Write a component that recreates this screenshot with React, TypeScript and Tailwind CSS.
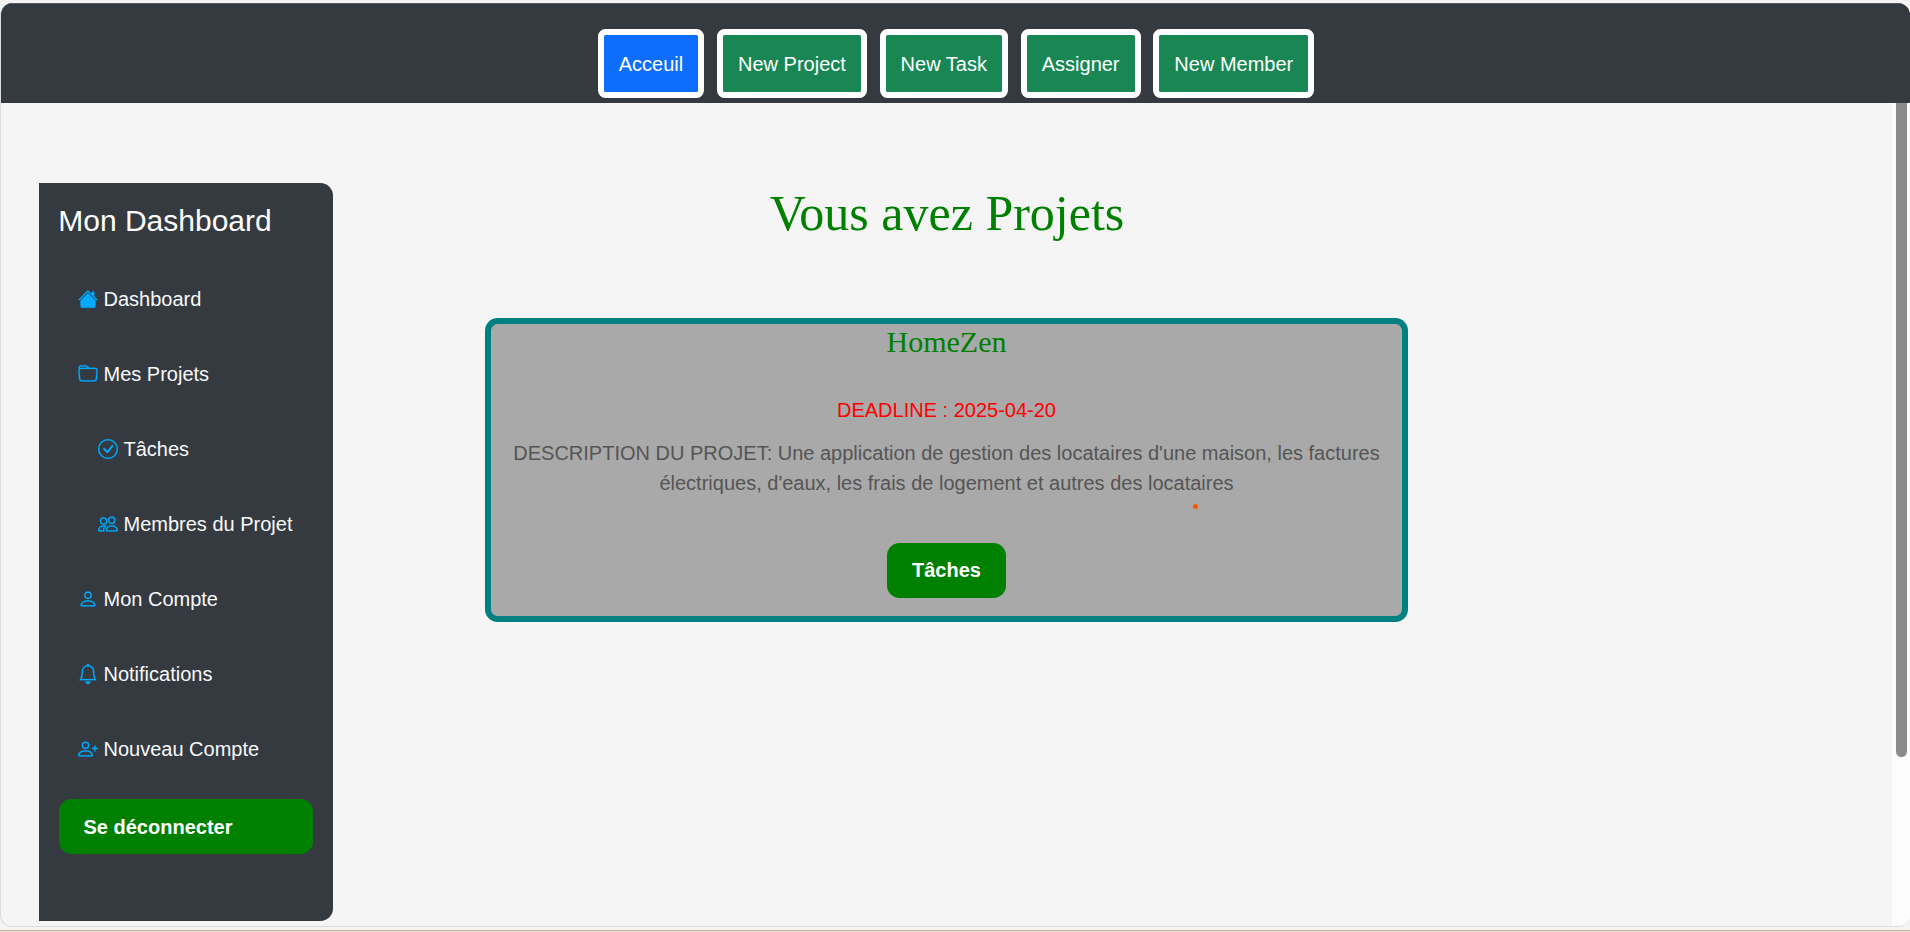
import type { IconType } from "react-icons";
import {
  BsBell,
  BsCheckCircle,
  BsFolder,
  BsHouseFill,
  BsPeople,
  BsPerson,
  BsPersonPlus,
} from "react-icons/bs";

type NavItem = { label: string; icon: IconType; nested?: boolean };

const actions = ["Acceuil", "New Project", "New Task", "Assigner", "New Member"];

const navItems: NavItem[] = [
  { label: "Dashboard", icon: BsHouseFill },
  { label: "Mes Projets", icon: BsFolder },
  { label: "Tâches", icon: BsCheckCircle, nested: true },
  { label: "Membres du Projet", icon: BsPeople, nested: true },
  { label: "Mon Compte", icon: BsPerson },
  { label: "Notifications", icon: BsBell },
  { label: "Nouveau Compte", icon: BsPersonPlus },
];

function Header() {
  return (
    <header className="flex h-[100px] shrink-0 justify-center gap-[12.6px] border-t border-[#5a5e64] bg-[#343a40] pt-[25px] pl-px">
      {actions.map((label, i) => (
        <button
          key={label}
          className={`h-[69px] rounded-[7.5px] border-6 border-white px-[15.1px] text-white ${i === 0 ? "bg-[#0d6efd]" : "bg-[#198754]"}`}
        >
          {label}
        </button>
      ))}
    </header>
  );
}

function Sidebar() {
  return (
    <aside className="flex h-[738px] w-[294px] shrink-0 flex-col rounded-r-[12.5px] bg-[#343a40] px-5 pt-5 text-white">
      <h2 className="-ml-[0.75px] text-[30px] leading-9">Mon Dashboard</h2>
      <nav className="mt-[22.5px] flex flex-col text-[#f8f9fa]">
        {navItems.map(({ label, icon: Icon, nested }) => (
          <a
            key={label}
            className={`flex h-[75px] items-center gap-[5.5px] whitespace-nowrap ${nested ? "pl-[39px]" : "pl-[19px]"}`}
          >
            <Icon className="size-5 shrink-0 text-[#00aaff] [stroke-width:0.2]" />
            {label}
          </a>
        ))}
      </nav>
      <button className="mt-[12.5px] h-[55px] rounded-[12.5px] bg-[#008000] px-[24.5px] text-left font-bold">
        Se déconnecter
      </button>
    </aside>
  );
}

function ProjectCard() {
  return (
    <article className="relative mt-[75px] flex h-[304px] w-[923px] flex-col items-center rounded-[12.5px] border-6 border-[#008080] bg-[#a9a9a9] text-center">
      <h3 className="font-['Liberation_Serif',serif] text-[30px] leading-9 text-[#008000]">HomeZen</h3>
      <p className="mt-[35px] leading-[30px] text-[#ff0000]">DEADLINE : 2025-04-20</p>
      <p className="mt-[13px] w-[880px] leading-[30px] text-[#555555]">
        DESCRIPTION DU PROJET: Une application de gestion des locataires d'une maison, les factures
        électriques, d'eaux, les frais de logement et autres des locataires
      </p>
      <button className="mt-[45px] h-[55px] rounded-[12.5px] bg-[#008000] px-[25px] pb-px font-bold text-white">
        Tâches
      </button>
      <span className="absolute top-[180px] left-[702px] size-[5px] rounded-full bg-[#ff5500]" />
    </article>
  );
}

export default function App() {
  return (
    <div className="flex h-[932px] w-[1910px] flex-col overflow-hidden bg-[#f4f4f4] pt-[3px] font-['Liberation_Sans',Arial,sans-serif] text-[20px] leading-[30px]">
      <div className="flex h-[924px] shrink-0 flex-col overflow-hidden rounded-[12px] border-b border-l border-[#dcdcdc] bg-[#f5f5f5]">
        <Header />
        <div className="flex min-h-0 flex-1">
          <div className="flex w-[1891px] pt-20 pl-[38px]">
            <Sidebar />
            <main className="ml-[152px] flex w-[923px] flex-col items-center">
              <h1 className="pl-px font-['Liberation_Serif',serif] text-[50px] leading-[60px] whitespace-nowrap text-[#008000]">
                Vous avez Projets
              </h1>
              <ProjectCard />
            </main>
          </div>
          <div className="flex-1 bg-[#fcfcfc] pl-1">
            <div className="h-[654px] w-[11px] rounded-b-full bg-[#8b8b8b]" />
          </div>
        </div>
      </div>
      <div className="mt-[3px] h-px shrink-0 bg-[#c4b3a0]" />
      <div className="h-px shrink-0 bg-[#eedccb]" />
    </div>
  );
}
